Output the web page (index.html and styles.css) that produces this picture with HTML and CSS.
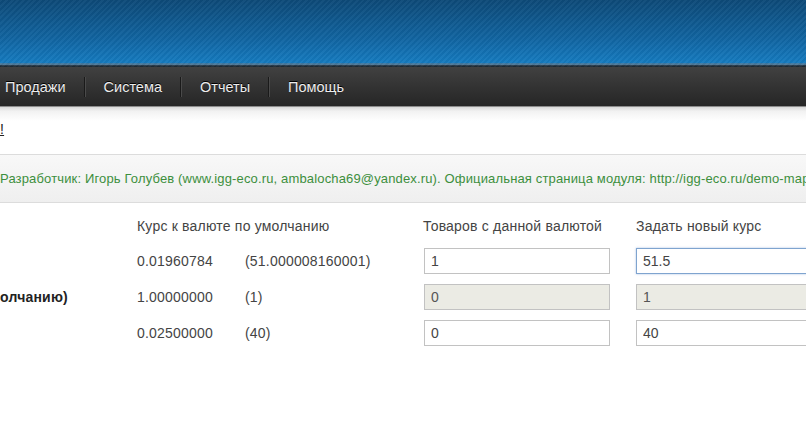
FILE: index.html
```html
<!DOCTYPE html>
<html lang="ru">
<head>
    <meta charset="UTF-8">
    <title>Курсы валют</title>
    <link rel="stylesheet" href="styles.css">
</head>
<body>
    <div class="header"></div>

    <div class="menu">
        <a class="menu-item" href="#">Продажи</a>
        <span class="menu-sep"></span>
        <a class="menu-item" href="#">Система</a>
        <span class="menu-sep"></span>
        <a class="menu-item" href="#">Отчеты</a>
        <span class="menu-sep"></span>
        <a class="menu-item" href="#">Помощь</a>
    </div>
    <div class="menu-shadow"></div>

    <div class="breadcrumb"><a href="#">!</a></div>

    <div class="info-bar">
        Разработчик: Игорь Голубев (www.igg-eco.ru, ambalocha69@yandex.ru). Официальная страница модуля: http://igg-eco.ru/demo-map
    </div>

    <div class="rates">
        <div class="rates-row rates-head">
            <div class="col-name"></div>
            <div class="col-rate">Курс к валюте по умолчанию</div>
            <div class="col-count">Товаров с данной валютой</div>
            <div class="col-new">Задать новый курс</div>
        </div>

        <div class="rates-row">
            <div class="col-name"></div>
            <div class="col-rate">0.01960784</div>
            <div class="col-back">(51.000008160001)</div>
            <div class="col-count"><input class="field" type="text" value="1"></div>
            <div class="col-new"><input class="field field-focus" type="text" value="51.5"></div>
        </div>

        <div class="rates-row">
            <div class="col-name default">олчанию)</div>
            <div class="col-rate">1.00000000</div>
            <div class="col-back">(1)</div>
            <div class="col-count"><input class="field" type="text" value="0" disabled></div>
            <div class="col-new"><input class="field" type="text" value="1" disabled></div>
        </div>

        <div class="rates-row">
            <div class="col-name"></div>
            <div class="col-rate">0.02500000</div>
            <div class="col-back">(40)</div>
            <div class="col-count"><input class="field" type="text" value="0"></div>
            <div class="col-new"><input class="field" type="text" value="40"></div>
        </div>
    </div>
</body>
</html>
```

FILE: styles.css
```css
* {
    margin: 0;
    padding: 0;
    box-sizing: border-box;
}

html, body {
    height: 100%;
    overflow: hidden;
}

body {
    font-family: Arial, "Liberation Sans", sans-serif;
    font-size: 14px;
    letter-spacing: 0.2px;
    color: #444;
    background-color: #fff;
}

.header {
    height: 67px;
    background:
        repeating-linear-gradient(135deg, rgba(255, 255, 255, 0.035) 0 2px, rgba(0, 0, 0, 0.035) 2px 4px),
        linear-gradient(to bottom, #0d4a78 0%, #11639f 55%, #157bc0 94%, #4e7898 95%, #4e7898 97%, #1d2a35 98%);
}

.menu {
    height: 40px;
    display: flex;
    align-items: center;
    background: linear-gradient(to bottom, #414141 0%, #333 50%, #262626 100%);
    border-bottom: 1px solid #8c8c8c;
}

.menu-item {
    color: #ececec;
    font-size: 14.5px;
    letter-spacing: 0;
    text-decoration: none;
    text-shadow: 0 -1px 0 #000;
    padding: 0 18px;
}

.menu-item:first-child {
    padding-left: 5px;
}

.menu-sep {
    width: 2px;
    height: 20px;
    border-left: 1px solid #1a1a1a;
    border-right: 1px solid #4a4a4a;
}

.menu-shadow {
    height: 14px;
    background: linear-gradient(to bottom, #d8d8d8 0%, #f2f2f2 30%, #fff 100%);
}

.breadcrumb {
    height: 33px;
    line-height: 16px;
}

.breadcrumb a {
    color: #222;
}

.info-bar {
    height: 49px;
    line-height: 47px;
    font-size: 13px;
    letter-spacing: 0.15px;
    color: #3d8f3d;
    white-space: nowrap;
    overflow: hidden;
    background: linear-gradient(to bottom, #f8f8f8, #efefef);
    border-top: 1px solid #dcdcdc;
    border-bottom: 1px solid #dcdcdc;
}

.rates {
    padding-top: 7px;
}

.rates-row {
    display: flex;
    align-items: center;
    height: 36px;
    white-space: nowrap;
}

.rates-head {
    height: 32px;
    margin-bottom: 1px;
}

.col-name {
    width: 137px;
    flex-shrink: 0;
}

.col-name.default {
    font-weight: bold;
    color: #222;
}

.col-rate {
    width: 108px;
    flex-shrink: 0;
}

.rates-head .col-rate {
    width: 286px;
}

.col-back {
    width: 178px;
    flex-shrink: 0;
}

.col-count {
    width: 213px;
    flex-shrink: 0;
    padding-left: 1px;
}

.rates-head .col-count {
    padding-left: 0;
}

.col-new {
    flex-shrink: 0;
}

.field {
    height: 26px;
    width: 186px;
    padding: 0 6px;
    font-family: Arial, "Liberation Sans", sans-serif;
    font-size: 14px;
    color: #444;
    border: 1px solid #c2c2c2;
    background-color: #fff;
    outline: none;
}

.col-new .field {
    width: 190px;
}

.field:disabled {
    background-color: #ebebe4;
    color: #555;
}

.field-focus {
    border-color: #7fa4cf;
    box-shadow: 0 0 2px rgba(82, 130, 200, 0.5);
}
```
